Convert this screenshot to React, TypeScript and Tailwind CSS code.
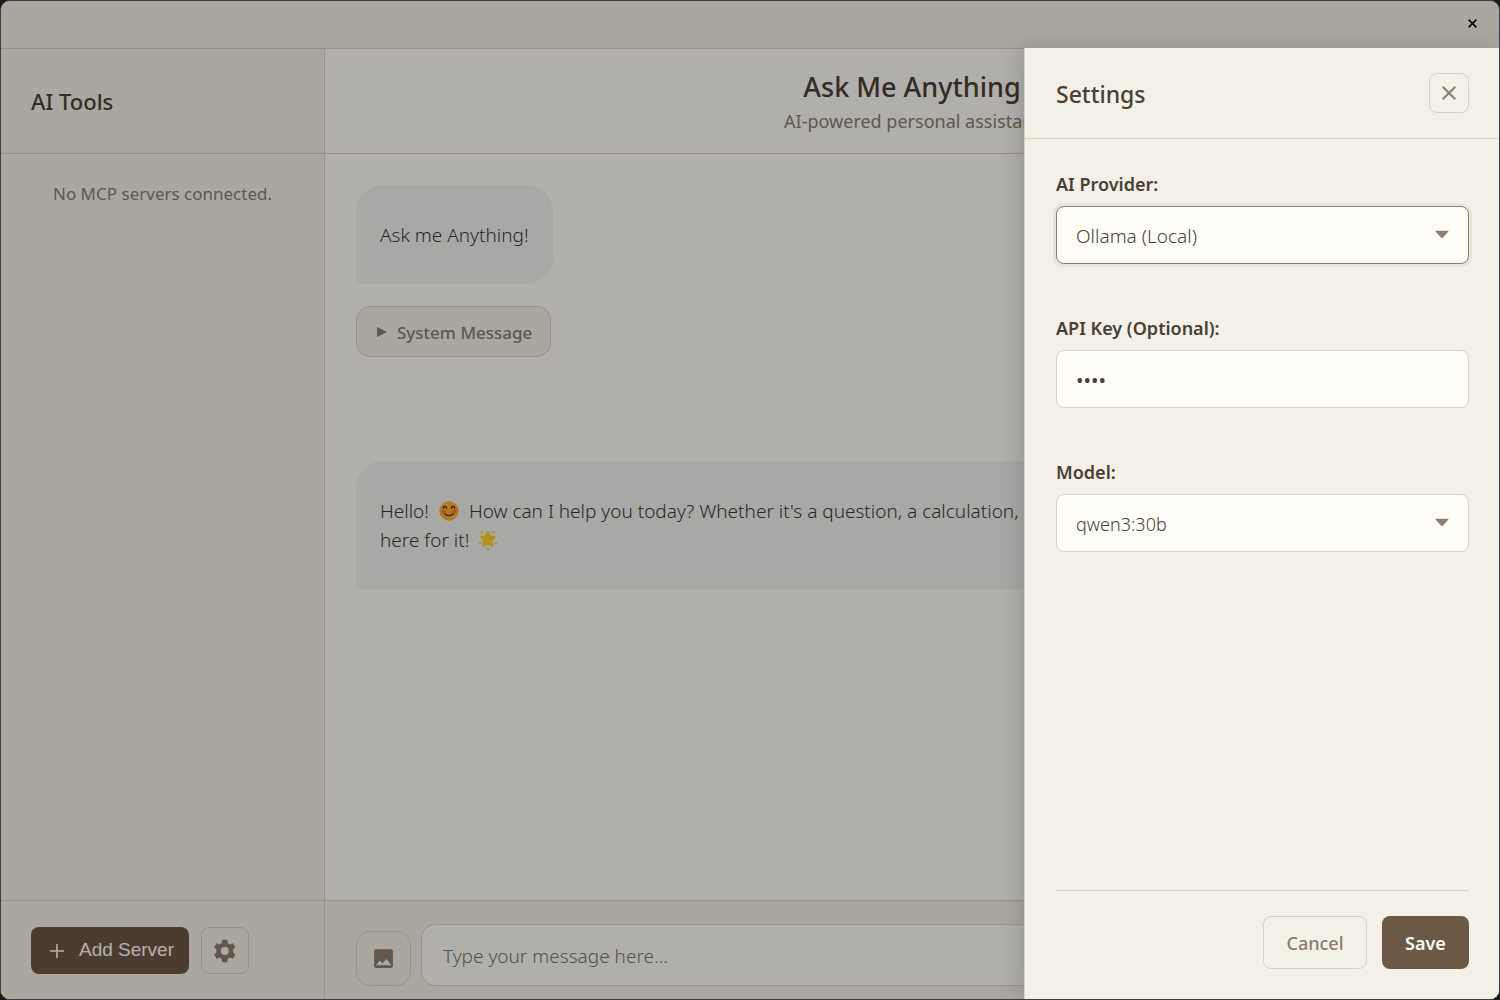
import React, { useState } from "react";

function Caret() {
  return (
    <svg className="pointer-events-none absolute right-5 top-6 h-[9px] w-[14px]" viewBox="0 0 14 9" aria-hidden="true">
      <path d="M1.2 .8h11.600c.8 0 .9.500.4 1L8 7.500c-.6.600-1.400.600-2 0L.8 1.800c-.5-.5-.4-1 .4-1z" fill="#8b7d6b" />
    </svg>
  );
}

function SmileEmoji() {
  return (
    <svg className="mx-[5px] inline-block h-5 w-5 align-[-3px]" viewBox="0 0 20 20" aria-hidden="true">
      <circle cx="10" cy="10" r="9.7" fill="#ffae2e" />
      <ellipse cx="4.6" cy="10.4" rx="2.2" ry="1.6" fill="#ff6a3d" />
      <ellipse cx="15.4" cy="10.4" rx="2.2" ry="1.6" fill="#ff6a3d" />
      <g fill="none" stroke="#4a2b17" strokeWidth="1.3" strokeLinecap="round">
        <path d="M4.200 7.200c.5-2.300 3-2.300 3.500 0M12.300 7.200c.5-2.300 3-2.300 3.500 0M5.800 12.600c1.800 2.600 6.600 2.600 8.400 0" />
      </g>
    </svg>
  );
}

function StarEmoji() {
  return (
    <svg className="mx-1 inline-block h-5 w-5 align-[-3px]" viewBox="0 0 20 20" aria-hidden="true">
      <g fill="#fcd22f" stroke="#fcd22f" strokeLinejoin="round">
        <path strokeWidth="3" d="M9.800 2.600l1.700 4.100 4.600.6-3.300 3.200 1.200 4.700-4.200-2.200-4.200 2.200 1-4.700-3.100-3.200 4.500-.6z" />
        <path strokeWidth="1" d="M4 1.200l1.200 1.800-2.100-.2zM15.900 1.200l-1.200 1.800 2.100-.2zM.8 12.700l2-.7-.6 1.700zM19.200 12.700l-2-.7.6 1.700zM10 17.400l1.100 1.800H8.900z" />
      </g>
    </svg>
  );
}

const fieldClass =
  "block h-[58px] w-full appearance-none rounded-lg border bg-[#fefdf8] px-[19px] pt-[2px] text-[#4a3f35] outline-none";

function Field({ id, label, children }: { id: string; label: string; children: React.ReactNode }) {
  return (
    <div className="mb-[52px]">
      <label htmlFor={id} className="mb-[10px] block text-[18px] font-semibold leading-6 text-[#4a3f35]">
        {label}
      </label>
      <div className="relative">{children}</div>
    </div>
  );
}

function Sidebar() {
  return (
    <aside className="flex w-[324px] shrink-0 flex-col border-r border-[#ddd2c2] bg-[#f4f0e6]">
      <div className="flex h-[105px] items-center border-b border-[#ddd2c2] px-[30px]">
        <h2 className="text-[22px] font-medium text-[#4a3f35]">AI Tools</h2>
      </div>
      <p className="flex-1 pt-[26px] text-center text-[17px] leading-7 text-[#8b7d6b]">No MCP servers connected.</p>
      <div className="flex h-[99px] gap-3 border-t border-[#ddd2c2] px-[30px] pt-[26px]">
        <button className="flex h-[47px] w-[158px] items-center justify-between rounded-lg bg-[#6b5845] pl-[19px] pr-[15px] font-['Liberation_Sans',sans-serif] text-[19px] text-[#fefdf8]">
          <svg className="h-[14px] w-[14px]" viewBox="0 0 14 14" aria-hidden="true">
            <path d="M7 0v14M0 7h14" stroke="currentColor" strokeWidth="1.6" />
          </svg>
          Add Server
        </button>
        <button aria-label="Server settings" className="flex h-[47px] w-12 items-center justify-center rounded-lg border border-[#ddd2c2] text-[#8b7d6b]">
          <svg className="h-6 w-[22px]" viewBox="0 0 22 24" fill="currentColor" fillRule="evenodd" aria-hidden="true">
            <path d="M8.200.8h5.100l.6 3.500 2.100 1.200 3-1.300 2.400 4.300-2.200 2v3l2.200 2-2.400 4.300-3-1.300-2.100 1.200-.6 3.500H8.200l-.6-3.500-2.100-1.200-3 1.300L.2 15.500l2.100-2v-3l-2.100-2L2.500 4.200l3 1.300 2.100-1.200zM10.800 8a4 4 0 1 0 0 8 4 4 0 0 0 0-8z" />
          </svg>
        </button>
      </div>
    </aside>
  );
}

function Chat() {
  return (
    <main className="flex min-w-0 flex-1 flex-col bg-[#fcfbf6]">
      <header className="h-[105px] border-b border-[#ddd2c2] pt-5 text-center">
        <h1 className="text-[27px] font-medium leading-9 text-[#4a3f35]">Ask Me Anything</h1>
        <p className="text-[18px] leading-8 text-[#8b7d6b]">AI-powered personal assistant</p>
      </header>
      <div className="flex flex-1 flex-col items-start gap-[22px] overflow-hidden p-[31px] text-[19px] font-light leading-[29px] text-[#3a3a35]">
        <div className="rounded-[27px] rounded-bl-[7px] bg-[#f1f1f0] px-6 pb-[34px] pt-9">Ask me Anything!</div>
        <button className="flex h-[51px] items-center gap-[10px] rounded-[14px] border border-[#ddd2c2] bg-[#f4f0e6] pl-5 pr-[18px] pt-px text-[17px] font-medium text-[#8b7d6b]">
          <svg className="h-[10px] w-[10px]" viewBox="0 0 10 10" aria-hidden="true">
            <path d="M0 0l10 5-10 5z" fill="currentColor" />
          </svg>
          System Message
        </button>
        <div className="flex h-[60px] items-center self-end rounded-[27px] rounded-br-[7px] bg-[#6b5845] px-6 text-white">Hello</div>
        <div className="w-[80%] rounded-[27px] rounded-bl-[7px] bg-[#f1f1f0] px-6 pb-[34px] pt-9">
          Hello! <SmileEmoji /> How can I help you today? Whether it's a question, a calculation, or just a chat, I'm
          <br />
          here for it! <StarEmoji />
        </div>
      </div>
      <form className="flex h-[99px] items-start gap-[10px] border-t border-[#ddd2c2] bg-[#f4f0e6] px-[31px] pt-[23px]">
        <button type="button" aria-label="Attach image" className="mt-[7px] flex size-[55px] shrink-0 items-center justify-center rounded-[14px] border border-[#ddd2c2] text-[#8b7d6b]">
          <svg className="size-[25px]" viewBox="0 0 24 24" fill="currentColor" aria-hidden="true">
            <path d="M21 19.300V4.700c0-.9-.8-1.700-1.700-1.700H4.700C3.800 3 3 3.800 3 4.700v14.600c0 .9.8 1.700 1.700 1.700h14.600c.9 0 1.700-.8 1.700-1.700zM8.500 14l2.500 2.800 3.800-4.300 4.700 6H4.700z" />
          </svg>
        </button>
        <input aria-label="Message" placeholder="Type your message here..." className="h-[62px] min-w-0 flex-1 rounded-[14px] border border-[#ddd2c2] bg-[#fcfbf6] px-[21px] pt-[2px] text-[19px] font-light outline-none placeholder:text-[#757575]" />
      </form>
    </main>
  );
}

function SettingsDrawer() {
  const [provider, setProvider] = useState("ollama");
  const [apiKey, setApiKey] = useState("none");
  const [model, setModel] = useState("qwen3:30b");
  return (
    <section aria-label="Settings" className="absolute bottom-0 right-0 top-[47px] flex w-[475px] flex-col border-l border-[#ddd2c2] bg-[#f3f0e7] shadow-[-4px_0_20px_rgba(0,0,0,0.15)]">
      <header className="flex h-[91px] items-center justify-between border-b border-[#ddd2c2] pl-[31px] pr-[30px]">
        <h2 className="pt-[2px] text-[23px] font-medium text-[#4a3f35]">Settings</h2>
        <button aria-label="Close settings" className="flex size-10 items-center justify-center rounded-lg border border-[#ddd2c2] text-[#8b7d6b]">
          <svg className="size-[14px]" viewBox="0 0 14 14" aria-hidden="true">
            <path d="M.7.7l12.600 12.600M13.300.7L.7 13.300" stroke="currentColor" strokeWidth="2" />
          </svg>
        </button>
      </header>
      <div className="flex flex-1 flex-col pb-[30px] pl-[31px] pr-[30px] pt-[33px]">
        <Field id="provider" label="AI Provider:">
          <select id="provider" value={provider} onChange={(e) => setProvider(e.target.value)} className={fieldClass + " border-[#8b7d6b] text-[19px] font-light ring-3 ring-[#8b7d6b]/10"}>
            <option value="ollama">Ollama (Local)</option>
          </select>
          <Caret />
        </Field>
        <Field id="api-key" label="API Key (Optional):">
          <input id="api-key" type="password" value={apiKey} onChange={(e) => setApiKey(e.target.value)} className={fieldClass + " border-[#ddd2c2] text-[20px]"} />
        </Field>
        <Field id="model" label="Model:">
          <select id="model" value={model} onChange={(e) => setModel(e.target.value)} className={fieldClass + " border-[#ddd2c2] text-[18px] font-light"}>
            <option value="qwen3:30b">qwen3:30b</option>
          </select>
          <Caret />
        </Field>
        <footer className="mt-auto flex justify-end gap-[15px] border-t border-[#ddd2c2] pt-[25px]">
          <button className="h-[53px] w-[104px] rounded-lg border border-[#ddd2c2] pt-[2px] text-[18px] font-medium text-[#8b7d6b]">Cancel</button>
          <button className="h-[53px] w-[87px] rounded-lg bg-[#6b5845] pt-[2px] text-[18px] font-semibold text-[#fefdf8]">Save</button>
        </footer>
      </div>
    </section>
  );
}

export default function App() {
  return (
    <div className="h-screen bg-[#1c1c1c] font-['Noto_Sans',sans-serif]">
      <div className="relative flex h-full flex-col overflow-hidden rounded-[10px] border border-[#3c3c3c] bg-[#f4f0e6]">
        <div className="flex h-12 shrink-0 items-center justify-end border-b border-[#ddd2c2] pb-[2px] pr-[22px]">
          <button aria-label="Close window" className="text-black">
            <svg className="size-[9px]" viewBox="0 0 9 9" aria-hidden="true">
              <path d="M.6.6l7.800 7.800M8.400.6L.6 8.400" stroke="currentColor" strokeWidth="1.5" />
            </svg>
          </button>
        </div>
        <div className="flex min-h-0 flex-1">
          <Sidebar />
          <Chat />
        </div>
        <div className="absolute inset-0 bg-black/30" />
        <SettingsDrawer />
      </div>
    </div>
  );
}
